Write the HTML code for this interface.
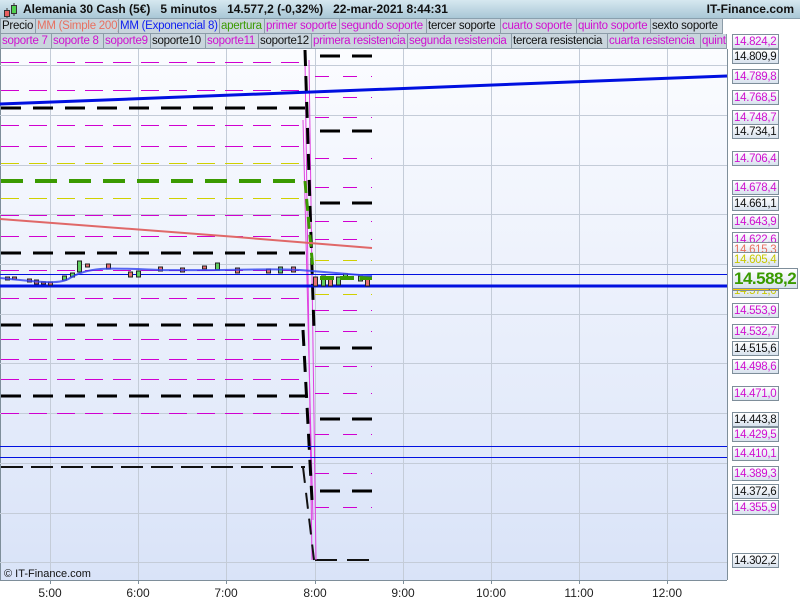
<!DOCTYPE html>
<html><head><meta charset="utf-8"><style>
*{margin:0;padding:0;box-sizing:border-box}
body{width:800px;height:600px;overflow:hidden;background:#fff;font-family:"Liberation Sans",Arial,sans-serif;position:relative}
#hdr{position:absolute;left:0;top:0;width:800px;height:19px;background:linear-gradient(#d6e8f0,#a9c7d6);border-bottom:1px solid #8aa0ae;font-weight:bold;font-size:12px;line-height:19px;color:#111}
.row{position:absolute;left:0;height:15px;font-size:11.5px;line-height:14px;letter-spacing:-0.25px}
.c{position:absolute;top:0;height:15px;background:#c9d5dd;border:1px solid #8c9ca8;border-top:none;padding-left:1px;white-space:nowrap;overflow:hidden}
.m{color:#d010d0}.k{color:#111}.b{color:#1020f0}.g{color:#3a9a00}.r{color:#e87060}
.lab{position:absolute;left:732px;width:47px;height:15px;font-size:11.5px;letter-spacing:-0.3px;line-height:14px;text-align:left;padding-left:1px;border:1px solid #7e8e9a;background:linear-gradient(#fff,#d8e2ee);white-space:nowrap;overflow:hidden}
</style></head><body>
<div id="hdr">
<svg style="position:absolute;left:2px;top:2px" width="16" height="17"><line x1="5" y1="6" x2="5" y2="16" stroke="#333"/><rect x="2.5" y="8.5" width="5" height="6" fill="#e86060" stroke="#333"/><line x1="12" y1="1" x2="12" y2="14" stroke="#333"/><rect x="9.5" y="3.5" width="5" height="8" fill="#50d050" stroke="#333"/></svg>
<span style="position:absolute;left:23px">Alemania 30 Cash (5€)&nbsp;&nbsp;&nbsp;5 minutos&nbsp;&nbsp;&nbsp;14.577,2 (-0,32%)&nbsp;&nbsp;&nbsp;22-mar-2021 8:44:31</span>
<span style="position:absolute;right:6px">IT-Finance.com</span>
</div>
<div class="row" style="top:19px">
<div class="c k" style="left:0;width:36px">Precio</div>
<div class="c r" style="left:35px;width:84px">MM (Simple 200)</div>
<div class="c b" style="left:118px;width:102px">MM (Exponencial 8)</div>
<div class="c g" style="left:219px;width:46px">apertura</div>
<div class="c m" style="left:264px;width:76px">primer soporte</div>
<div class="c m" style="left:339px;width:88px">segundo soporte</div>
<div class="c k" style="left:426px;width:75px">tercer soporte</div>
<div class="c m" style="left:500px;width:77px">cuarto soporte</div>
<div class="c m" style="left:576px;width:75px">quinto soporte</div>
<div class="c k" style="left:650px;width:73px">sexto soporte</div>
</div>
<div class="row" style="top:34px">
<div class="c m" style="left:0;width:52px">soporte 7</div>
<div class="c m" style="left:51px;width:53px">soporte 8</div>
<div class="c m" style="left:103px;width:48px">soporte9</div>
<div class="c k" style="left:150px;width:56px">soporte10</div>
<div class="c m" style="left:205px;width:54px">soporte11</div>
<div class="c k" style="left:258px;width:54px">soporte12</div>
<div class="c m" style="left:311px;width:97px">primera resistencia</div>
<div class="c m" style="left:407px;width:105px">segunda resistencia</div>
<div class="c k" style="left:511px;width:97px">tercera resistencia</div>
<div class="c m" style="left:607px;width:94px">cuarta resistencia</div>
<div class="c m" style="left:700px;width:27px">quinta</div>
</div>
<svg style="position:absolute;left:0;top:49px" width="800" height="551" viewBox="0 49 800 551">
<defs><linearGradient id="bg" x1="0" y1="0" x2="0" y2="1"><stop offset="0" stop-color="#fbfcff"/><stop offset="1" stop-color="#d9e3f8"/></linearGradient></defs>
<rect x="0" y="49" width="727" height="531" fill="url(#bg)"/>
<line x1="0.5" y1="49" x2="0.5" y2="580" stroke="#7e8e9a"/>
<line x1="727.5" y1="49" x2="727.5" y2="580" stroke="#7e8e9a"/>
<line x1="0" y1="580.5" x2="727" y2="580.5" stroke="#7e8e9a"/>
<g stroke="#c4ccd8" stroke-width="1">
<line x1="0" y1="65.5" x2="727" y2="65.5"/><line x1="0" y1="115.5" x2="727" y2="115.5"/><line x1="0" y1="165.5" x2="727" y2="165.5"/><line x1="0" y1="214.5" x2="727" y2="214.5"/><line x1="0" y1="264.5" x2="727" y2="264.5"/><line x1="0" y1="314.5" x2="727" y2="314.5"/><line x1="0" y1="363.5" x2="727" y2="363.5"/><line x1="0" y1="413.5" x2="727" y2="413.5"/><line x1="0" y1="463.5" x2="727" y2="463.5"/><line x1="0" y1="513.5" x2="727" y2="513.5"/><line x1="0" y1="562.5" x2="727" y2="562.5"/>
<line x1="50.5" y1="49" x2="50.5" y2="580"/><line x1="138.5" y1="49" x2="138.5" y2="580"/><line x1="226.5" y1="49" x2="226.5" y2="580"/><line x1="315.5" y1="49" x2="315.5" y2="580"/><line x1="403.5" y1="49" x2="403.5" y2="580"/><line x1="491.5" y1="49" x2="491.5" y2="580"/><line x1="579.5" y1="49" x2="579.5" y2="580"/><line x1="667.5" y1="49" x2="667.5" y2="580"/>
</g>
<g stroke="#d000d0" stroke-width="1" stroke-dasharray="18,10">
<line x1="1" y1="62.5" x2="305" y2="62.5"/><line x1="1" y1="90.5" x2="305" y2="90.5"/><line x1="1" y1="125.5" x2="305" y2="125.5"/><line x1="1" y1="146.5" x2="305" y2="146.5"/><line x1="1" y1="215.5" x2="305" y2="215.5"/><line x1="1" y1="236.5" x2="305" y2="236.5"/><line x1="1" y1="270.5" x2="305" y2="270.5"/><line x1="1" y1="298.5" x2="305" y2="298.5"/><line x1="1" y1="339.5" x2="305" y2="339.5"/><line x1="1" y1="359.5" x2="305" y2="359.5"/><line x1="1" y1="379.5" x2="305" y2="379.5"/><line x1="1" y1="413.5" x2="305" y2="413.5"/>
</g>
<g stroke="#d0d000" stroke-width="1" stroke-dasharray="18,10"><line x1="1" y1="163.5" x2="305" y2="163.5"/><line x1="1" y1="198.5" x2="305" y2="198.5"/></g>
<g stroke="#000" stroke-width="3" stroke-dasharray="20,12"><line x1="1" y1="108" x2="305" y2="108"/><line x1="1" y1="253" x2="305" y2="253"/><line x1="1" y1="325" x2="305" y2="325"/><line x1="1" y1="396" x2="305" y2="396"/></g>
<line x1="1" y1="467" x2="305" y2="467" stroke="#111" stroke-width="2" stroke-dasharray="22,8"/>
<line x1="1" y1="181" x2="305" y2="181" stroke="#3a9a00" stroke-width="4" stroke-dasharray="22,12"/>
<g stroke="#d000d0" stroke-width="1" stroke-dasharray="14,14">
<line x1="315" y1="76.5" x2="372" y2="76.5"/><line x1="315" y1="97.5" x2="372" y2="97.5"/><line x1="315" y1="117.5" x2="372" y2="117.5"/><line x1="315" y1="158.5" x2="372" y2="158.5"/><line x1="315" y1="187.5" x2="372" y2="187.5"/><line x1="315" y1="221.5" x2="372" y2="221.5"/><line x1="315" y1="239.5" x2="372" y2="239.5"/><line x1="315" y1="310.5" x2="372" y2="310.5"/><line x1="315" y1="331.5" x2="372" y2="331.5"/><line x1="315" y1="366.5" x2="372" y2="366.5"/><line x1="315" y1="393.5" x2="372" y2="393.5"/><line x1="315" y1="434.5" x2="372" y2="434.5"/><line x1="315" y1="473.5" x2="372" y2="473.5"/><line x1="315" y1="507.5" x2="372" y2="507.5"/>
</g>
<g stroke="#d0d000" stroke-width="1" stroke-dasharray="14,14"><line x1="315" y1="260.5" x2="372" y2="260.5"/><line x1="315" y1="294.5" x2="372" y2="294.5"/></g>
<g stroke="#000" stroke-width="3" stroke-dasharray="20,12"><line x1="320" y1="56" x2="372" y2="56"/><line x1="320" y1="131" x2="372" y2="131"/><line x1="320" y1="203" x2="372" y2="203"/><line x1="320" y1="348" x2="372" y2="348"/><line x1="320" y1="419" x2="372" y2="419"/><line x1="320" y1="491" x2="372" y2="491"/></g>
<line x1="315" y1="560" x2="372" y2="560" stroke="#111" stroke-width="2" stroke-dasharray="22,10"/>
<g fill="none" stroke-width="1" stroke="#e040e0">
<path d="M305,60 L312,560"/><path d="M309,60 L316,560"/><path d="M303,120 L313,520"/>
</g>
<path d="M305,50 L314,330 M303,330 L312,500" stroke="#000" stroke-width="3" stroke-dasharray="16,10" fill="none"/>
<path d="M303,467 L314,560" stroke="#111" stroke-width="2" stroke-dasharray="16,10" fill="none"/>
<path d="M305,181 L313,270" stroke="#3a9a00" stroke-width="3" stroke-dasharray="12,6" fill="none"/>
<path d="M0,219 C100,226 250,238 372,248" stroke="#e06868" stroke-width="2" fill="none"/>
<line x1="0" y1="104" x2="727" y2="76" stroke="#0010e0" stroke-width="3"/>
<line x1="0" y1="286" x2="727" y2="286" stroke="#0010e0" stroke-width="3"/>
<line x1="0" y1="274.5" x2="727" y2="274.5" stroke="#0010e0" stroke-width="1"/>
<line x1="0" y1="446.5" x2="727" y2="446.5" stroke="#0010e0" stroke-width="1"/>
<line x1="0" y1="457.5" x2="727" y2="457.5" stroke="#0010e0" stroke-width="1"/>
<g stroke="#222" stroke-width="1">
<rect x="5.5" y="277" width="4" height="3" fill="#e87070"/><rect x="12.5" y="277" width="4" height="2" fill="#e87070"/><rect x="27.5" y="279" width="4" height="3" fill="#e87070"/><rect x="34.5" y="280" width="4" height="4" fill="#e87070"/><rect x="41.5" y="282" width="4" height="2" fill="#e87070"/><rect x="48.5" y="282" width="4" height="3" fill="#e87070"/><rect x="62.5" y="276" width="4" height="4" fill="#60d060"/><rect x="70.5" y="273" width="4" height="4" fill="#60d060"/><rect x="77.5" y="261" width="4" height="11" fill="#60d060"/><rect x="85.5" y="264" width="4" height="3" fill="#e87070"/><rect x="106.5" y="264" width="4" height="5" fill="#e87070"/><rect x="128.5" y="272" width="4" height="5" fill="#e87070"/><rect x="136.5" y="271" width="4" height="6" fill="#60d060"/><rect x="158.5" y="267" width="4" height="4" fill="#e87070"/><rect x="180.5" y="268" width="4" height="4" fill="#e87070"/><rect x="202.5" y="266" width="4" height="3" fill="#e87070"/><rect x="215.5" y="263" width="4" height="7" fill="#60d060"/><rect x="235.5" y="268" width="4" height="5" fill="#e87070"/><rect x="266.5" y="269" width="4" height="4" fill="#e87070"/><rect x="278.5" y="267" width="4" height="6" fill="#60d060"/><rect x="291.5" y="267" width="4" height="5" fill="#e87070"/><rect x="313.5" y="277" width="4" height="9" fill="#e87070"/><rect x="321.5" y="276" width="4" height="10" fill="#60d060"/><rect x="328.5" y="277" width="4" height="9" fill="#e87070"/><rect x="336.5" y="277" width="4" height="8" fill="#60d060"/><rect x="343.5" y="274" width="4" height="4" fill="#60d060"/><rect x="358.5" y="276" width="4" height="5" fill="#60d060"/><rect x="365.5" y="279" width="4" height="7" fill="#e87070"/>
</g>
<line x1="320" y1="278" x2="372" y2="278" stroke="#3a9a00" stroke-width="4" stroke-dasharray="14,6"/>
<path d="M0,278 C40,282 60,285 70,278 C90,266 110,268 160,270 C220,271 270,268 300,270 L372,276" stroke="#3040f0" stroke-width="2" fill="none" opacity="0.8"/>
<text x="4" y="577" font-size="11" fill="#111" font-family="Liberation Sans, sans-serif">© IT-Finance.com</text>
<g font-size="12" fill="#222" font-family="Liberation Sans, sans-serif" text-anchor="middle">
<text x="50" y="597">5:00</text><text x="138" y="597">6:00</text><text x="226" y="597">7:00</text><text x="315" y="597">8:00</text><text x="403" y="597">9:00</text><text x="491" y="597">10:00</text><text x="579" y="597">11:00</text><text x="667" y="597">12:00</text>
</g>
<g stroke="#7e8e9a"><line x1="50.5" y1="580" x2="50.5" y2="584"/><line x1="138.5" y1="580" x2="138.5" y2="584"/><line x1="226.5" y1="580" x2="226.5" y2="584"/><line x1="315.5" y1="580" x2="315.5" y2="584"/><line x1="403.5" y1="580" x2="403.5" y2="584"/><line x1="491.5" y1="580" x2="491.5" y2="584"/><line x1="579.5" y1="580" x2="579.5" y2="584"/><line x1="667.5" y1="580" x2="667.5" y2="584"/></g>
</svg>
<div class="lab m" style="top:34px">14.824,2</div>
<div class="lab k" style="top:49px">14.809,9</div>
<div class="lab m" style="top:69px">14.789,8</div>
<div class="lab m" style="top:90px">14.768,5</div>
<div class="lab m" style="top:110px">14.748,7</div>
<div class="lab k" style="top:124px">14.734,1</div>
<div class="lab m" style="top:151px">14.706,4</div>
<div class="lab m" style="top:180px">14.678,4</div>
<div class="lab k" style="top:196px">14.661,1</div>
<div class="lab m" style="top:214px">14.643,9</div>
<div class="lab m" style="top:232px">14.622,6</div>
<div class="lab r" style="top:242px">14.615,3</div>
<div class="lab" style="top:252px;color:#c8c800">14.605,4</div>
<div class="lab" style="top:283px;color:#c8c800">14.571,0</div>
<div class="lab k" style="top:280px;height:11px;background:#f8c800;line-height:10px;overflow:hidden">14.577,2</div>
<div class="lab" style="top:268px;width:66px;height:21px;font-size:17px;letter-spacing:-0.5px;font-weight:bold;line-height:19px;color:#3a9a00">14.588,2</div>
<div class="lab m" style="top:303px">14.553,9</div>
<div class="lab m" style="top:324px">14.532,7</div>
<div class="lab k" style="top:341px">14.515,6</div>
<div class="lab m" style="top:359px">14.498,6</div>
<div class="lab m" style="top:386px">14.471,0</div>
<div class="lab k" style="top:412px">14.443,8</div>
<div class="lab m" style="top:427px">14.429,5</div>
<div class="lab m" style="top:446px">14.410,1</div>
<div class="lab m" style="top:466px">14.389,3</div>
<div class="lab k" style="top:484px">14.372,6</div>
<div class="lab m" style="top:500px">14.355,9</div>
<div class="lab k" style="top:553px">14.302,2</div>
</body></html>
